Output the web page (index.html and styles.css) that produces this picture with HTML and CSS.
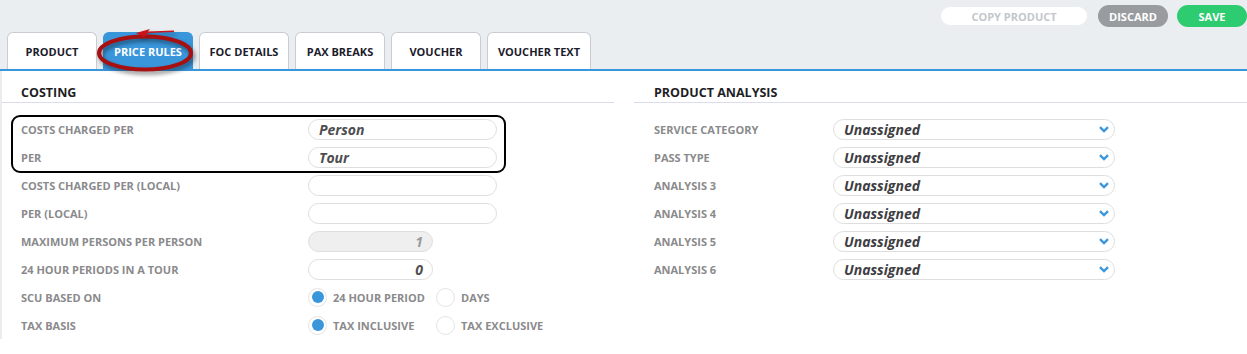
FILE: index.html
```html
<html>
  <head>
    <title>price rules</title>
    <meta name="viewport" content="width=device-width" />
    <link rel="stylesheet" href="styles.css">
  </head>
  <body>
    <header class="top">
      <div class="actions">
        <button class="btn copy">COPY PRODUCT</button>
        <button class="btn discard">DISCARD</button>
        <button class="btn save">SAVE</button>
      </div>
      <nav class="tabs">
        <div class="tab">PRODUCT</div>
        <div class="tab active">PRICE RULES</div>
        <div class="tab">FOC DETAILS</div>
        <div class="tab">PAX BREAKS</div>
        <div class="tab">VOUCHER</div>
        <div class="tab wide">VOUCHER TEXT</div>
      </nav>
      <!-- scribble round the active tab -->
      <svg class="scribble" width="120" height="55" viewBox="0 0 120 55">
        <ellipse cx="55" cy="28" rx="46" ry="16.5" fill="none" stroke="#a70f10" stroke-width="4" />
        <path d="M46 8 L60 4 L58 6.5 L84 5.5 L84 7 L58 8 L54 12 Z" fill="#c8141a" />
      </svg>
    </header>

    <main class="panel">
      <section class="col left">
        <div class="title">COSTING</div>
        <div class="rows">
          <div class="row">
            <label>COSTS CHARGED PER</label>
            <div class="field">Person</div>
          </div>
          <div class="row">
            <label>PER</label>
            <div class="field">Tour</div>
          </div>
          <div class="row">
            <label>COSTS CHARGED PER (LOCAL)</label>
            <div class="field"></div>
          </div>
          <div class="row">
            <label>PER (LOCAL)</label>
            <div class="field"></div>
          </div>
          <div class="row">
            <label>MAXIMUM PERSONS PER PERSON</label>
            <div class="field num disabled">1</div>
          </div>
          <div class="row">
            <label>24 HOUR PERIODS IN A TOUR</label>
            <div class="field num">0</div>
          </div>
          <div class="row">
            <label>SCU BASED ON</label>
            <div class="radios">
              <div class="opt"><span class="dot on"></span>24 HOUR PERIOD</div>
              <div class="opt"><span class="dot"></span>DAYS</div>
            </div>
          </div>
          <div class="row">
            <label>TAX BASIS</label>
            <div class="radios">
              <div class="opt"><span class="dot on"></span>TAX INCLUSIVE</div>
              <div class="opt"><span class="dot"></span>TAX EXCLUSIVE</div>
            </div>
          </div>
        </div>
        <div class="boxed"></div>
      </section>

      <section class="col right">
        <div class="title">PRODUCT ANALYSIS</div>
        <div class="rows">
          <div class="row">
            <label>SERVICE CATEGORY</label>
            <div class="select">Unassigned<svg width="10" height="7" viewBox="0 0 10 7"><path d="M1 1.2 L5 5 L9 1.2" fill="none" stroke="#3a96db" stroke-width="2.4" /></svg></div>
          </div>
          <div class="row">
            <label>PASS TYPE</label>
            <div class="select">Unassigned<svg width="10" height="7" viewBox="0 0 10 7"><path d="M1 1.2 L5 5 L9 1.2" fill="none" stroke="#3a96db" stroke-width="2.4" /></svg></div>
          </div>
          <div class="row">
            <label>ANALYSIS 3</label>
            <div class="select">Unassigned<svg width="10" height="7" viewBox="0 0 10 7"><path d="M1 1.2 L5 5 L9 1.2" fill="none" stroke="#3a96db" stroke-width="2.4" /></svg></div>
          </div>
          <div class="row">
            <label>ANALYSIS 4</label>
            <div class="select">Unassigned<svg width="10" height="7" viewBox="0 0 10 7"><path d="M1 1.2 L5 5 L9 1.2" fill="none" stroke="#3a96db" stroke-width="2.4" /></svg></div>
          </div>
          <div class="row">
            <label>ANALYSIS 5</label>
            <div class="select">Unassigned<svg width="10" height="7" viewBox="0 0 10 7"><path d="M1 1.2 L5 5 L9 1.2" fill="none" stroke="#3a96db" stroke-width="2.4" /></svg></div>
          </div>
          <div class="row">
            <label>ANALYSIS 6</label>
            <div class="select">Unassigned<svg width="10" height="7" viewBox="0 0 10 7"><path d="M1 1.2 L5 5 L9 1.2" fill="none" stroke="#3a96db" stroke-width="2.4" /></svg></div>
          </div>
        </div>
      </section>
    </main>
  </body>
</html>
```

FILE: styles.css
```css
body {
  margin: 0;
  background: white;
  font: bold 11px "Open Sans", sans-serif;
  color: #222;
}

.top {
  position: relative;
  background: #ebeef0;
  border-bottom: 2px solid #3a96db;
}

.actions {
  height: 32px;
  display: flex;
  justify-content: flex-end;
  align-items: center;
}
.btn {
  font: bold 11px "Open Sans", sans-serif;
  border: 0;
  border-radius: 11px;
  padding: 0;
  color: white;
}
.btn.copy {
  width: 146px;
  height: 18px;
  background: white;
  color: #c3c7cb;
  margin-right: 11px;
}
.btn.discard {
  width: 70px;
  height: 22px;
  background: #989c9f;
  margin-right: 9px;
}
.btn.save {
  width: 70px;
  height: 22px;
  background: #2ecc71;
}

.tabs {
  display: flex;
  padding-left: 7px;
  gap: 6px;
}
.tab {
  width: 90px;
  height: 37px;
  box-sizing: border-box;
  display: flex;
  align-items: center;
  justify-content: center;
  background: white;
  border: 1px solid #c9cdd1;
  border-bottom: 0;
  border-radius: 6px 6px 0 0;
  color: #1c1c2c;
}
.tab.wide {
  width: 104px;
}
.tab.active {
  background: #3a96db;
  border-color: #3a96db;
  color: white;
}

.scribble {
  position: absolute;
  left: 90px;
  top: 25px;
  filter: drop-shadow(2px 3px 2px rgba(0, 0, 0, 0.45));
}

.panel {
  display: flex;
  border-left: 2px solid #ececec;
}
.col {
  position: relative;
}
.col.left {
  width: 612px;
}
.col.right {
  flex-grow: 1;
  margin-left: 20px;
}

.title {
  font-size: 12.5px;
  line-height: 16px;
  padding: 14px 0 1px 19px;
  border-bottom: 1px solid #dcdcec;
  color: #1e1e24;
}
.col.right .title {
  padding-left: 20px;
}

.rows {
  padding-top: 12px;
}
.row {
  height: 28px;
  display: flex;
  align-items: center;
}
.row label {
  width: 306px;
  flex-shrink: 0;
  padding-left: 19px;
  box-sizing: border-box;
  color: #8a8a8c;
}
.col.right .row label {
  width: 199px;
  padding-left: 20px;
}

.field {
  width: 189px;
  height: 21px;
  box-sizing: border-box;
  border: 1px solid #dedede;
  border-radius: 11px;
  padding: 0 10px;
  font: italic bold 14px/19px "Open Sans", sans-serif;
  color: #4e4e52;
}
.field.num {
  width: 125px;
  text-align: right;
  padding-right: 9px;
}
.field.disabled {
  background: #efefef;
  color: #9a9a9c;
}

.radios {
  display: flex;
}
.opt {
  width: 128px;
  display: flex;
  align-items: center;
  color: #8a8a8c;
}
.dot {
  width: 19px;
  height: 19px;
  box-sizing: border-box;
  border: 1px solid #e4e4e4;
  border-radius: 50%;
  margin-right: 6px;
  display: flex;
  align-items: center;
  justify-content: center;
}
.dot.on::after {
  content: "";
  width: 12px;
  height: 12px;
  border-radius: 50%;
  background: #3a96db;
}

.select {
  width: 282px;
  height: 21px;
  box-sizing: border-box;
  border: 1px solid #dedede;
  border-radius: 11px;
  padding: 0 5px 0 10px;
  display: flex;
  align-items: center;
  justify-content: space-between;
  font: italic bold 14px/19px "Open Sans", sans-serif;
  color: #3e3e42;
}

/* black outline drawn over the first two rows */
.boxed {
  position: absolute;
  left: 9px;
  top: 44px;
  width: 495px;
  height: 58px;
  box-sizing: border-box;
  border: 2px solid black;
  border-radius: 9px;
  pointer-events: none;
}
```
